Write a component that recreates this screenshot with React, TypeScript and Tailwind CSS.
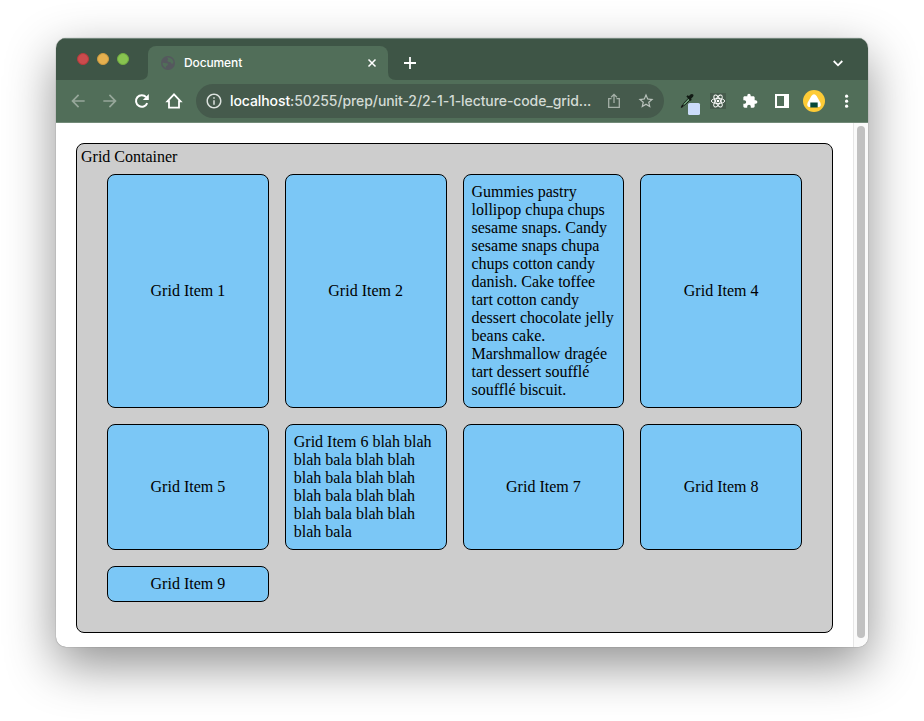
import React from "react";

const ITEMS = [
  "Grid Item 1",
  "Grid Item 2",
  "Gummies pastry lollipop chupa chups sesame snaps. Candy sesame snaps chupa chups cotton candy danish. Cake toffee tart cotton candy dessert chocolate jelly beans cake. Marshmallow dragée tart dessert soufflé soufflé biscuit.",
  "Grid Item 4",
  "Grid Item 5",
  "Grid Item 6 blah blah blah bala blah blah blah bala blah blah blah bala blah blah blah bala blah blah blah bala",
  "Grid Item 7",
  "Grid Item 8",
  "Grid Item 9",
];

function Glyph({ d, size = 20, className = "" }: { d: string; size?: number; className?: string }) {
  return (
    <svg width={size} height={size} viewBox="0 0 24 24" fill="currentColor" className={`shrink-0 ${className}`}>
      <path d={d} />
    </svg>
  );
}

function Cell({ children }: { children: React.ReactNode }) {
  return <div className="flex h-8 w-8 shrink-0 items-center justify-center text-white">{children}</div>;
}

function Flare({ flip = false }: { flip?: boolean }) {
  return (
    <svg width="8" height="8" viewBox="0 0 8 8" className="shrink-0 self-end">
      <path d={flip ? "M0 0Q0 8 8 8H0Z" : "M8 0Q8 8 0 8H8Z"} fill="#516e59" />
    </svg>
  );
}

function TabStrip() {
  return (
    <div className="flex h-[42px] bg-[#3e5546] shadow-[inset_0_1px_0_#71857a]">
      <div className="flex w-[84px] items-center gap-2 pl-[21px]">
        <span className="h-3 w-3 rounded-full border border-[#b8393b] bg-[#cb4b4d]" />
        <span className="h-3 w-3 rounded-full border border-[#cf9b40] bg-[#e6b04f]" />
        <span className="h-3 w-3 rounded-full border border-[#72ae41] bg-[#88c450]" />
      </div>
      <Flare />
      <div className="mt-2 flex w-60 items-center rounded-t-lg bg-[#516e59] pl-[13px] pr-[11px]">
        <svg width="14" height="14" viewBox="0 0 14 14">
          <circle cx="7" cy="7" r="7" fill="#55585e" />
          <path
            d="M1.5 6.8C3 6.5 4.2 7.2 5.5 7.2C7 7.1 7.5 8.5 6.5 9.3C5.8 10 4.9 10 4.6 12L3 10.8C2 9.6 1.5 8.2 1.5 6.8ZM5.8 1.6L7.5 1.5C9.9 1.7 11.8 3.3 12.4 5.5L12.2 7.6C10.8 8 10 7.4 10 6.4C9 6 7.3 6.2 6.5 5C5.8 4 8 3.7 7 2.8Z"
            fill="#516e59"
          />
        </svg>
        <span className="ml-[9px] flex-1 text-[12px] font-medium leading-4 tracking-[-0.12px] text-white">Document</span>
        <svg width="10" height="10" viewBox="0 0 10 10" className="text-white">
          <path d="M1.5 1.5L8.5 8.5M8.5 1.5L1.5 8.5" stroke="currentColor" strokeWidth="1.5" />
        </svg>
      </div>
      <Flare flip />
      <div className="flex w-7 items-center justify-center pt-2 text-white">
        <svg width="12" height="12" viewBox="0 0 12 12">
          <path d="M6 0V12M0 6H12" stroke="currentColor" strokeWidth="1.8" />
        </svg>
      </div>
      <div className="flex flex-1 items-center justify-end pr-[25px] pt-2 text-white">
        <svg width="10" height="7" viewBox="0 0 10 7">
          <path d="M0.7 1L5 5.3L9.3 1" fill="none" stroke="currentColor" strokeWidth="1.8" />
        </svg>
      </div>
    </div>
  );
}

function Toolbar() {
  return (
    <div className="flex h-[43px] items-center border-b border-[#728a78] bg-[#516e59] px-1.5">
      <Cell>
        <Glyph className="text-[#96a79a]" d="M20 11H7.83l5.59-5.59L12 4l-8 8 8 8 1.41-1.41L7.83 13H20v-2z" />
      </Cell>
      <Cell>
        <Glyph className="text-[#96a79a]" d="M12 4l-1.41 1.41L16.17 11H4v2h12.17l-5.58 5.59L12 20l8-8z" />
      </Cell>
      <Cell>
        <svg width="16" height="16" viewBox="0 0 16 16">
          <path d="M13.2 10.1A5.8 5.8 0 1 1 12.2 4.2" fill="none" stroke="currentColor" strokeWidth="2" />
          <path d="M14.8 1V7H8.8Z" fill="currentColor" />
        </svg>
      </Cell>
      <Cell>
        <svg width="18" height="18" viewBox="0 0 18 18">
          <path d="M2.4 9.4H4V15.6H14V9.4H15.6L9 2.4Z" fill="none" stroke="currentColor" strokeWidth="1.8" />
        </svg>
      </Cell>
      <div className="ml-1.5 mr-1.5 flex h-[34px] w-[468px] shrink-0 items-center rounded-full bg-[#455a4c] text-[#dce2de]">
        <div className="flex w-[34px] justify-end pr-[7px]">
          <Glyph
            size={18}
            d="M11 7h2v2h-2zm0 4h2v6h-2zm1-9C6.48 2 2 6.48 2 12s4.48 10 10 10 10-4.48 10-10S17.52 2 12 2zm0 18c-4.41 0-8-3.59-8-8s3.59-8 8-8 8 3.59 8 8-3.59 8-8 8z"
          />
        </div>
        <div className="w-[368px] whitespace-nowrap text-[14px] font-medium leading-5 tracking-[-0.09px] text-[#d3dad5]">
          <span className="text-white">localhost</span>:50255/prep/unit-2/2-1-1-lecture-code_grid...
        </div>
        <div className="flex w-8 justify-center text-[#a5b0a8]">
          <svg width="14" height="16" viewBox="0 0 14 16" fill="none" stroke="currentColor" strokeWidth="1.3">
            <path d="M4.5 5.6H1.7V14.4H12.3V5.6H9.5M7 10V1.5M4.1 4.3L7 1.4L9.9 4.3" />
          </svg>
        </div>
        <div className="flex w-8 justify-center text-[#b9c2bc]">
          <Glyph
            size={18}
            d="M22 9.24l-7.19-.62L12 2 9.19 8.63 2 9.24l5.46 4.73L5.82 21 12 17.27 18.18 21l-1.63-7.03L22 9.24zM12 15.4l-3.76 2.27 1-4.28-3.32-2.88 4.38-.38L12 6.1l1.71 4.04 4.38.38-3.32 2.88 1 4.28L12 15.4z"
          />
        </div>
      </div>
      <Cell>
        <svg width="32" height="28" viewBox="0 0 32 28">
          <path d="M12.4 19.6L13.4 16.6L18.6 11.1L20.3 12.8L15.1 17.8Z" fill="#6b9c77" stroke="#17231a" strokeWidth="1" />
          <path d="M12.7 18.2L11.4 20.6" stroke="#111" strokeWidth="1.4" />
          <path d="M16.4 9.4L17.5 8.2L19 9L20.4 7.6Q22 6.5 23.2 7.6Q24.1 9 22.8 10.1L21.2 11.6L21.6 12.9L20.4 14Z" fill="#111a14" />
          <rect x="18" y="16" width="12" height="12" rx="1.6" fill="#cbdcfa" />
        </svg>
      </Cell>
      <Cell>
        <svg width="16" height="16" viewBox="0 0 16 16">
          <rect width="16" height="16" fill="#465b4c" />
          <g fill="none" stroke="currentColor" strokeWidth="0.9">
            <ellipse cx="8" cy="8" rx="6.7" ry="2.6" />
            <ellipse cx="8" cy="8" rx="6.7" ry="2.6" transform="rotate(60 8 8)" />
            <ellipse cx="8" cy="8" rx="6.7" ry="2.6" transform="rotate(120 8 8)" />
          </g>
          <circle cx="8" cy="8" r="1.3" fill="currentColor" />
        </svg>
      </Cell>
      <Cell>
        <Glyph
          size={16}
          d="M20.5 11H19V7c0-1.1-.9-2-2-2h-4V3.5C13 2.12 11.88 1 10.5 1S8 2.12 8 3.5V5H4c-1.1 0-1.99.9-1.99 2v3.8H3.5c1.49 0 2.7 1.21 2.7 2.7s-1.21 2.7-2.7 2.7H2V20c0 1.1.9 2 2 2h3.8v-1.5c0-1.49 1.21-2.7 2.7-2.7 1.49 0 2.7 1.21 2.7 2.7V22H17c1.1 0 2-.9 2-2v-4h1.5c1.38 0 2.5-1.12 2.5-2.5S21.88 11 20.5 11z"
        />
      </Cell>
      <Cell>
        <span className="h-3.5 w-3.5 border-2 border-r-[5px] border-white" />
      </Cell>
      <Cell>
        <svg width="22" height="22" viewBox="0 0 22 22">
          <circle cx="11" cy="11" r="11" fill="#fdcb36" />
          <path d="M11 4.2Q12.5 4.2 13.6 6L17.3 12.4Q18.9 16.6 15.4 17H6.6Q3.1 16.6 4.7 12.4L8.4 6Q9.5 4.2 11 4.2Z" fill="#fff" />
          <path d="M7.3 12.4H14.7V17.4H7.3Z" fill="#07483a" />
        </svg>
      </Cell>
      <Cell>
        <svg width="4" height="14" viewBox="0 0 4 14" className="ml-px" fill="currentColor">
          <circle cx="1.6" cy="2.2" r="1.6" />
          <circle cx="1.6" cy="7.2" r="1.6" />
          <circle cx="1.6" cy="12.2" r="1.6" />
        </svg>
      </Cell>
    </div>
  );
}

export default function App() {
  return (
    <div className="h-[721px] w-[924px] overflow-hidden bg-white pl-14 pt-[38px] font-[Inter,sans-serif]">
      <div className="flex h-[609px] w-[812px] flex-col overflow-hidden rounded-[10px] bg-white shadow-[0_0_1px_0_rgba(0,0,0,0.6),0_18px_50px_rgba(0,0,0,0.44)]">
        <TabStrip />
        <Toolbar />
        <div className="flex min-h-0 flex-1">
          <main className="flex-1 pl-5 pr-5 pt-5 font-['Liberation_Serif',serif] text-[16px] leading-[18px] text-black">
            <section className="h-[490px] w-[757px] rounded-lg border border-black bg-[#cdcdcd] p-1">
              <div>Grid Container</div>
              <div className="mx-[26px] mt-2 grid grid-cols-4 gap-4">
                {ITEMS.map((item) => (
                  <div
                    key={item}
                    className="flex items-center justify-center rounded-lg border border-black bg-[#7bc7f6] p-2"
                  >
                    {item}
                  </div>
                ))}
              </div>
            </section>
          </main>
          <div className="w-[15px] border-l border-[#e6e6e6] bg-[#fafafa] pl-[3px] pt-[3px]">
            <div className="h-[512px] w-2 rounded-full bg-[#c1c1c1]" />
          </div>
        </div>
      </div>
    </div>
  );
}
